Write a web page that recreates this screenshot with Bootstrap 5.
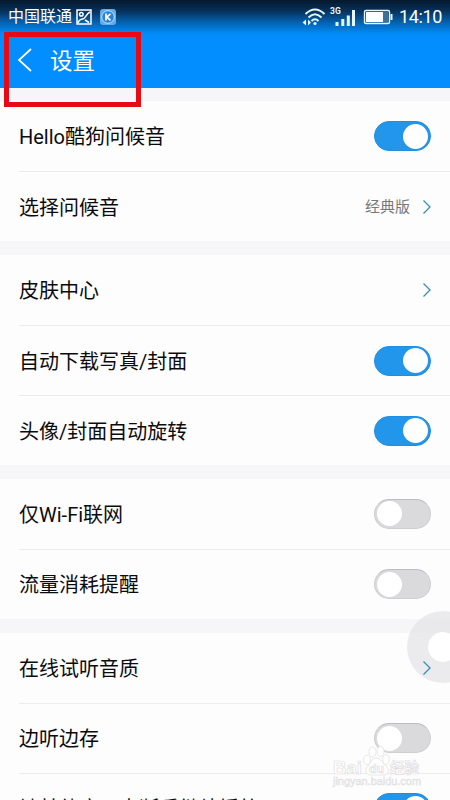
<!DOCTYPE html>
<html lang="zh-CN">
<head>
<meta charset="utf-8">
<meta name="viewport" content="width=device-width, initial-scale=1">
<title>设置</title>
<link href="https://cdn.jsdelivr.net/npm/bootstrap@5.3.0/dist/css/bootstrap.min.css" rel="stylesheet">
<style>
body{font-family:Roboto,"Noto Sans CJK SC",sans-serif;background:#f6f6f8;height:800px;color:#0b0b0d}
.screen{width:450px;height:800px}
.topbar{height:87.6px;background:linear-gradient(#06182c 0,#07315a 11px,#0464b4 23px,#028cfa 34px,#028eff 40px)}
.statusbar{height:33px;padding-left:8px;padding-right:8px;font-size:16px;line-height:32px}
.clock{font-size:18px;letter-spacing:-.35px}
.titlebar{height:55px;padding-left:17px}
.titlebar h1{font-size:22.5px;line-height:30px;margin:0 0 0 17px;padding-top:1px;font-weight:400}
.group-card{background:#fdfdfd;margin-top:13.8px}
.setting{height:70px;margin-left:19px;padding-right:19px;font-size:20px;line-height:30px}
.setting>span:first-child{padding-top:2px}
.setting+.setting{border-top:1px solid #ececee}
.value-text{font-size:15px;color:#77777b;margin-right:13px}
.toggle{width:57px;height:30px;border-radius:15px;background:#dad9dc;border:1px solid #cfced1;border-top-color:#bdbcc0;padding:0 2px}
.toggle::before{content:"";width:25px;height:25px;border-radius:50%;background:#fff}
.toggle.on{background:#2196eb;border-color:#218ee0;justify-content:flex-end}
.highlight{left:4px;top:32px;width:137px;height:75px;border:5px solid #e70a14}
.assist{left:407px;top:611px;width:72px;height:72px;border-radius:50%;border:21px solid rgba(224,223,226,.62);background:#fff;background-clip:padding-box}
.watermark{left:331px;top:744px}
</style>
<script src="https://cdn.jsdelivr.net/npm/bootstrap@5.3.0/dist/js/bootstrap.bundle.min.js"></script>
</head>
<body class="overflow-hidden">
<div class="screen position-relative overflow-hidden">
<header class="topbar text-white">
  <div class="statusbar d-flex align-items-center">
    <span>中国联通</span>
    <svg class="ms-1" width="16" height="16" viewBox="0 0 16 16" fill="none" stroke="#fff" stroke-width="1.5"><rect x="1" y="1" width="14" height="14"/><circle cx="5.3" cy="5.3" r="1.8"/><path d="M2 14c1-3 3-4 5-4s3-5 7-7M9 11l4 2.500"/></svg>
    <svg class="ms-2" width="16" height="16" viewBox="0 0 16 16"><rect width="16" height="16" rx="3" fill="#64abe9"/><circle cx="8" cy="8" r="6.3" fill="#2a83d5" stroke="#c9e6ff"/><path d="M6 4.500v7M10.500 4.800L6.800 8l3.700 3.300" fill="none" stroke="#fff" stroke-width="1.7"/></svg>
    <svg class="ms-auto" width="93" height="26" viewBox="0 0 93 26" fill="none" stroke="#e6f6fa">
      <path d="M3.500 10Q13 1 22.500 10M6.500 13.500Q13 7 19.500 13.500M9.500 17Q13 13.500 16.500 17" stroke-width="2"/>
      <circle cx="13" cy="19.500" r="1.600" fill="#e6f6fa" stroke="none"/>
      <path d="M4 15.500v6l-3.500-3zM6 15.500v6l3-3zM33.500 18h3v4h-3zM39.300 15h3v7h-3zM44.800 11.500h3v10.500h-3zM50 6h3v16h-3z" fill="#e6f6fa" stroke="none"/>
      <text x="28" y="10" font-size="8.500" font-weight="700" fill="#e6f6fa" stroke="none">3G</text>
      <rect x="62.500" y="6.500" width="25" height="13" rx="1.500" stroke-width="1.400"/><path d="M64 8h17v10H64z" fill="#fff" stroke="none"/><path d="M81 8h5v10h-5z" fill="#3f7299" stroke="none"/><path d="M89.500 10v6" stroke-width="2"/>
    </svg>
    <span class="clock ms-1">14:10</span>
  </div>
  <div class="titlebar d-flex align-items-center">
    <svg width="16" height="26" viewBox="0 0 16 26" fill="none" stroke="#fff" stroke-width="1.7"><path d="M14 1L2 12l12 11"/></svg>
    <h1>设置</h1>
  </div>
</header>
<main>
  <section class="group-card">
    <div class="setting d-flex align-items-center justify-content-between"><span>Hello酷狗问候音</span><span class="toggle on d-flex align-items-center"></span></div>
    <div class="setting d-flex align-items-center"><span>选择问候音</span><span class="value-text ms-auto">经典版</span><svg width="8" height="14" viewBox="0 0 8 14" fill="none" stroke="#358fb8" stroke-width="1.300"><path d="M.5.5L7 7 .5 13.500"/></svg></div>
  </section>
  <section class="group-card">
    <div class="setting d-flex align-items-center justify-content-between"><span>皮肤中心</span><svg width="8" height="14" viewBox="0 0 8 14" fill="none" stroke="#358fb8" stroke-width="1.300"><path d="M.5.5L7 7 .5 13.500"/></svg></div>
    <div class="setting d-flex align-items-center justify-content-between"><span>自动下载写真/封面</span><span class="toggle on d-flex align-items-center"></span></div>
    <div class="setting d-flex align-items-center justify-content-between"><span>头像/封面自动旋转</span><span class="toggle on d-flex align-items-center"></span></div>
  </section>
  <section class="group-card">
    <div class="setting d-flex align-items-center justify-content-between"><span>仅Wi-Fi联网</span><span class="toggle d-flex align-items-center"></span></div>
    <div class="setting d-flex align-items-center justify-content-between"><span>流量消耗提醒</span><span class="toggle d-flex align-items-center"></span></div>
  </section>
  <section class="group-card">
    <div class="setting d-flex align-items-center justify-content-between"><span>在线试听音质</span><svg class="position-relative z-3" width="8" height="14" viewBox="0 0 8 14" fill="none" stroke="#358fb8" stroke-width="1.300"><path d="M.5.5L7 7 .5 13.500"/></svg></div>
    <div class="setting d-flex align-items-center justify-content-between"><span>边听边存</span><span class="toggle d-flex align-items-center"></span></div>
    <div class="setting d-flex align-items-center justify-content-between"><span>被其他应用中断后继续播放</span><span class="toggle on d-flex align-items-center"></span></div>
  </section>
</main>
<div class="highlight position-absolute"></div>
<div class="assist position-absolute"></div>
<svg class="watermark position-absolute" width="100" height="48" viewBox="0 0 100 48" fill="#fff" stroke="#dededf" stroke-width=".7">
  <text x="2" y="30" font-family="Liberation Sans,sans-serif" font-weight="700" font-size="19" textLength="29" lengthAdjust="spacingAndGlyphs">Bai</text>
  <ellipse cx="36" cy="16" rx="3.500" ry="4.800"/><ellipse cx="41.500" cy="8" rx="3.500" ry="5"/><ellipse cx="49.500" cy="7.500" rx="3.500" ry="5"/><ellipse cx="55" cy="15.500" rx="3.300" ry="4.800"/>
  <path d="M45.500 14c-5 0-5 5-8.500 8-4 4-2 9 3 9h12c6 0 7-5 3-9-4-3-5-8-9.500-8z"/>
  <text x="38" y="29" font-family="Liberation Sans,sans-serif" font-weight="700" font-size="12" textLength="15" lengthAdjust="spacingAndGlyphs">du</text>
  <text x="59" y="29" font-size="15" font-weight="700" textLength="29" lengthAdjust="spacingAndGlyphs">经验</text>
  <text x="2" y="40.500" font-family="Liberation Sans,sans-serif" font-size="10" textLength="88" lengthAdjust="spacingAndGlyphs" fill="#f3f3f4" stroke-width=".45">jingyan.baidu.com</text>
</svg>
</div>
</body>
</html>
